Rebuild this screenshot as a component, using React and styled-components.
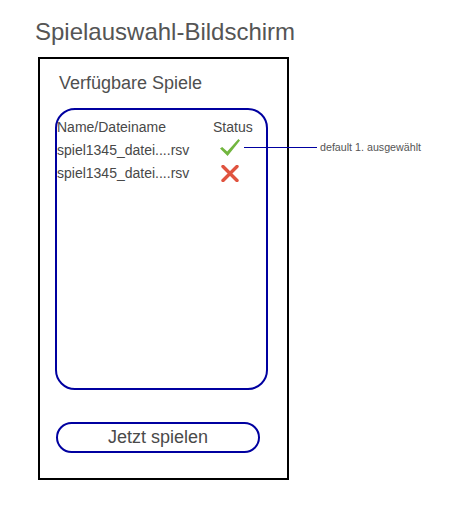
import React from 'react';
import styled, { createGlobalStyle } from 'styled-components';

const GlobalStyle = createGlobalStyle`
    body {
        margin: 0;
        background: #ffffff;
        font-family: "Liberation Sans", Arial, sans-serif;
    }
`;

const games = [
    { id: 1, name: 'spiel1345_datei....rsv', ok: true },
    { id: 2, name: 'spiel1345_datei....rsv', ok: false },
];

const Page = styled.div`
    padding: 18px 0 0 35px;
`;

const Title = styled.h1`
    margin: 0;
    font-size: 24px;
    line-height: 28px;
    font-weight: normal;
    color: #555555;
`;

const Frame = styled.div`
    box-sizing: border-box;
    width: 251px;
    height: 423px;
    margin: 11px 0 0 3px;
    border: 2px solid #000000;
    display: flex;
    flex-direction: column;
    padding: 13px 0 0 15px;
`;

const Heading = styled.h2`
    margin: 0 0 14px 4px;
    font-size: 18px;
    line-height: 22px;
    font-weight: normal;
    color: #4f4f4f;
`;

const Panel = styled.div`
    box-sizing: border-box;
    width: 213px;
    height: 282px;
    border: 2px solid #0000a0;
    border-radius: 20px;
    padding-top: 6px;
`;

const Row = styled.div`
    position: relative;
    display: grid;
    grid-template-columns: 156px 40px;
    height: 23px;
    align-items: center;
    font-size: 14px;
    line-height: 23px;
    color: #484848;
`;

const IconCell = styled.div`
    display: flex;
    justify-content: center;
    margin-left: -6px;
    transform: translateY(${(p) => p.$shift}px);
`;

const Callout = styled.div`
    position: absolute;
    left: 187px;
    top: 0;
    height: 17px;
    display: flex;
    align-items: center;
    gap: 3px;
    white-space: nowrap;
`;

const CalloutLine = styled.div`
    width: 73px;
    height: 1.5px;
    background: #0000a0;
`;

const CalloutText = styled.span`
    font-size: 10.7px;
    color: #555555;
`;

const PlayButton = styled.button`
    box-sizing: border-box;
    width: 204px;
    height: 31px;
    margin: 32px 0 0 1px;
    border: 2px solid #0000a0;
    border-radius: 16px;
    background: #ffffff;
    font-family: inherit;
    font-size: 18px;
    color: #4a4a4a;
    padding: 0;
`;

const Check = () => (
    <svg width="20" height="17" viewBox="0 0 20 17">
        <path d="M0 9.6 L2.2 8 L7.2 12.4 L18.4 0 L20 1.6 L7.6 17 Z" fill="#72b63f" />
    </svg>
);

const Cross = () => (
    <svg width="18" height="17" viewBox="0 0 18 17">
        <path d="M2 1.5 L16 15.5 M16 1.5 L2 15.5" stroke="#e0533f" strokeWidth="3.4" strokeLinecap="round" />
    </svg>
);

export default function App() {
    return (
        <Page>
            <GlobalStyle />
            <Title>Spielauswahl-Bildschirm</Title>
            <Frame>
                <Heading>Verfügbare Spiele</Heading>
                <Panel>
                    <Row>
                        <span>Name/Dateiname</span>
                        <span>Status</span>
                    </Row>
                    {games.map((g, i) => (
                        <Row key={g.id}>
                            <span>{g.name}</span>
                            <IconCell $shift={g.ok ? -3 : 0}>{g.ok ? <Check /> : <Cross />}</IconCell>
                            {i === 0 && (
                                <Callout>
                                    <CalloutLine />
                                    <CalloutText>default 1. ausgewählt</CalloutText>
                                </Callout>
                            )}
                        </Row>
                    ))}
                </Panel>
                <PlayButton>Jetzt spielen</PlayButton>
            </Frame>
        </Page>
    );
}
